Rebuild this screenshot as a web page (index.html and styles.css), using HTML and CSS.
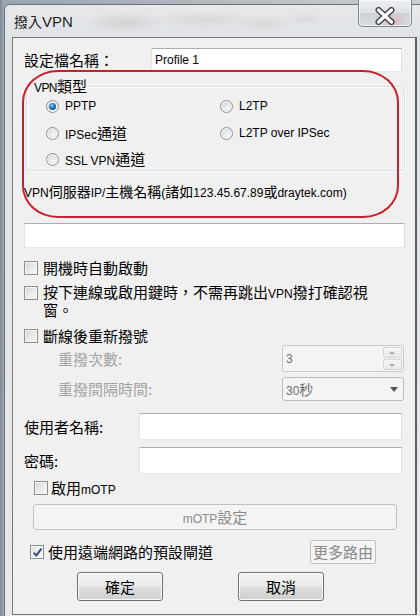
FILE: index.html
```html
<!DOCTYPE html>
<html lang="zh-Hant">
<head>
<meta charset="utf-8">
<title>撥入VPN</title>
<link rel="stylesheet" href="styles.css">
</head>
<body>
<div class="desk">
  <div class="window">
    <div class="titlebar">
      <span class="title"><span class="zh">撥入</span>VPN</span>
      <div class="close">
        <svg width="26" height="18" viewBox="0 0 26 18">
          <path d="M6.5 3 L19.5 15 M19.5 3 L6.5 15" stroke="#3c3c3c" stroke-width="6" stroke-linecap="round" fill="none"/>
          <path d="M6.5 3 L19.5 15 M19.5 3 L6.5 15" stroke="#ffffff" stroke-width="3.4" stroke-linecap="round" fill="none"/>
        </svg>
      </div>
    </div>
    <div class="client">
      <div class="row name-row">
        <span class="zh lbl-name">設定檔名稱：</span>
        <div class="input name-input">Profile 1</div>
      </div>

      <div class="group">
        <span class="legend">VPN<span class="zh">類型</span></span>
        <div class="radios">
          <div class="radio"><span class="rb on"></span><span class="rl">PPTP</span></div>
          <div class="radio"><span class="rb"></span><span class="rl">L2TP</span></div>
          <div class="radio"><span class="rb"></span><span class="rl">IPSec<span class="zh">通道</span></span></div>
          <div class="radio"><span class="rb"></span><span class="rl">L2TP over IPSec</span></div>
          <div class="radio"><span class="rb"></span><span class="rl">SSL VPN<span class="zh">通道</span></span></div>
        </div>
      </div>

      <div class="server-label"><span class="lat">VPN</span><span class="zh">伺服器</span>IP/<span class="zh">主機名稱</span>(<span class="zh">諸如</span>123.45.67.89<span class="zh">或</span>draytek.com)</div>
      <div class="input server-input"></div>

      <div class="check-row cr1"><span class="cb"></span><span class="zh">開機時自動啟動</span></div>
      <div class="check-row cr2"><span class="cb"></span><span class="zh wrap">按下連線或啟用鍵時，不需再跳出<span class="lat">VPN</span>撥打確認視<br>窗。</span></div>
      <div class="check-row cr3"><span class="cb"></span><span class="zh">斷線後重新撥號</span></div>

      <div class="sub-row sr1">
        <span class="zh sub-lbl">重撥次數:</span>
        <div class="spin">
          <span class="spin-val">3</span>
          <div class="spin-btns">
            <span class="sb up"></span>
            <span class="sb down"></span>
          </div>
        </div>
      </div>
      <div class="sub-row sr2">
        <span class="zh sub-lbl">重撥間隔時間:</span>
        <div class="combo">
          <span class="combo-val">30<span class="zh">秒</span></span>
          <span class="combo-arrow"></span>
        </div>
      </div>

      <div class="field-row fr1">
        <span class="zh field-lbl">使用者名稱:</span>
        <div class="input field-input"></div>
      </div>
      <div class="field-row fr2">
        <span class="zh field-lbl">密碼:</span>
        <div class="input field-input"></div>
      </div>

      <div class="check-row motp-row"><span class="cb"></span><span class="motp-lbl"><span class="zh">啟用</span>mOTP</span></div>
      <div class="btn disabled motp-btn"><span>mOTP<span class="zh">設定</span></span></div>

      <div class="gw-row">
        <span class="cb checked">
          <svg width="11" height="11" viewBox="0 0 11 11"><path d="M1.8 5.6 L4.3 8.6 L9.4 1.6" stroke="#354c86" stroke-width="2" fill="none" stroke-linejoin="round"/></svg>
        </span>
        <span class="zh gw-text">使用遠端網路的預設閘道</span>
        <div class="btn disabled more-btn"><span class="zh">更多路由</span></div>
      </div>

      <div class="btn-row">
        <div class="btn ok"><span class="zh">確定</span></div>
        <div class="btn cancel"><span class="zh">取消</span></div>
      </div>
    </div>
    <div class="annot"></div>
  </div>
</div>
</body>
</html>
```

FILE: styles.css
```css
* { box-sizing: border-box; }
html, body {
  margin: 0;
  padding: 0;
}
body {
  width: 420px;
  height: 616px;
  overflow: hidden;
  background: linear-gradient(90deg, #7d8894 0, #9aa4ae 3px, #c9d0d4 100%);
  font-family: "Liberation Sans", "Noto Sans CJK TC", sans-serif;
  font-size: 12px;
  color: #000;
}
.zh {
  font-family: "Noto Sans CJK TC", sans-serif;
  font-size: 15px;
}
.lat {
  font-family: "Liberation Sans", sans-serif;
  font-size: 12px;
}
.desk {
  padding: 4px 0 0 4px;
}
.window {
  position: relative;
  width: 430px;
  height: 640px;
  border: 1px solid #6e747a;
  border-radius: 6px 6px 0 0;
  background: linear-gradient(180deg, #e6e8ea 0, #dfe2e5 40px, #e8eaec 100%);
}
.titlebar {
  height: 32px;
  position: relative;
  background:
    radial-gradient(ellipse 40px 10px at 120px 17px, rgba(120,110,110,0.16), transparent),
    radial-gradient(ellipse 50px 9px at 200px 15px, rgba(140,120,120,0.13), transparent),
    radial-gradient(ellipse 30px 8px at 260px 18px, rgba(150,120,120,0.12), transparent),
    radial-gradient(ellipse 20px 6px at 300px 14px, rgba(120,120,140,0.10), transparent);
  border-radius: 6px 6px 0 0;
}
.title {
  position: absolute;
  left: 9px;
  top: 7px;
  height: 18px;
  font-size: 15px;
  line-height: 18px;
  color: #1e1e1e;
}
.title .zh { font-size: 14px; line-height: 18px; }
.close {
  position: absolute;
  left: 353px;
  top: -5px;
  width: 54px;
  height: 27px;
  border: 1px solid #80858a;
  border-top: none;
  border-radius: 0 0 5px 5px;
  background:
    radial-gradient(ellipse 14px 10px at 34px 22px, rgba(230,120,130,0.35), transparent),
    linear-gradient(180deg, #eceef0 0, #dfe2e5 50%, #cfd3d7 51%, #d8dbde 100%);
  box-shadow: inset 0 0 0 1px rgba(255,255,255,0.6);
  display: flex;
  align-items: center;
  justify-content: center;
  padding-top: 5px;
}
.client {
  margin-left: 7px;
  width: 405px;
  height: 578px;
  border: 1px solid #767a7e;
  border-right: 2px solid #5d6165;
  background: #f0f0f0;
  padding: 10px 10px 0 11px;
  display: flex;
  flex-direction: column;
}
.client .zh, .client .lat { line-height: 18px; }
.input {
  background: #fff;
  border: 1px solid;
  border-color: #abadb3 #dbdfe6 #e3e9ef #e2e3ea;
}
.name-row {
  display: flex;
  align-items: center;
  height: 24px;
  flex: none;
}
.lbl-name {
  width: 127px;
}
.name-input {
  width: 251px;
  height: 24px;
  padding: 4px 0 0 3px;
  line-height: 15px;
}
.group {
  position: relative;
  flex: none;
  margin: 14px 0 0 2px;
  width: 379px;
  height: 85px;
  border: 1px solid #d5dfe5;
  border-radius: 3px;
  box-shadow: inset 1px 1px 0 #fff, 1px 1px 0 #fff;
  padding: 6px 0 0 19px;
}
.legend {
  position: absolute;
  left: 6px;
  top: -10px;
  height: 18px;
  background: #f0f0f0;
  padding: 0 1px;
  line-height: 18px;
  letter-spacing: -0.6px;
}
.legend .zh { letter-spacing: 0; }
.radios {
  display: grid;
  grid-template-columns: 174px 180px;
  grid-template-rows: 27px 26px 26px;
}
.radio {
  display: flex;
  align-items: center;
  gap: 6px;
  height: 26px;
}
.rl {
  height: 18px;
  line-height: 18px;
  white-space: nowrap;
}
.rb {
  width: 13px;
  height: 13px;
  border-radius: 50%;
  border: 1px solid #8e8f8f;
  background: radial-gradient(circle at 60% 65%, #f6f6f6 0, #e4e4e4 45%, #c9c9c9 100%);
  box-shadow: inset 0 0 0 1px #fbfbfb;
  flex: none;
  position: relative;
}
.rb.on::after {
  content: "";
  position: absolute;
  left: 2px;
  top: 2px;
  width: 7px;
  height: 7px;
  border-radius: 50%;
  background: radial-gradient(circle at 40% 35%, #9bd4f6 0, #2f8bd0 35%, #0c4d92 80%, #0a3f78 100%);
}
.server-label {
  flex: none;
  margin-top: 11px;
  height: 18px;
  line-height: 18px;
  white-space: nowrap;
}
.server-label .zh { font-size: 14px; }
.server-input {
  flex: none;
  margin-top: 23px;
  width: 381px;
  height: 25px;
}
.check-row {
  flex: none;
  display: flex;
  align-items: center;
  gap: 5px;
  height: 18px;
}
.cb {
  width: 14px;
  height: 14px;
  flex: none;
  border: 1px solid #8e8f8f;
  background: linear-gradient(135deg, #d2d4d6 0, #e8e9ea 50%, #f8f8f8 100%);
  box-shadow: inset 0 0 0 1px #f4f4f4;
  display: flex;
  align-items: center;
  justify-content: center;
}
.cb.checked {
  background: linear-gradient(135deg, #dfe2e6 0, #f2f3f4 60%, #ffffff 100%);
}
.cr1 { margin-top: 11px; }
.cr2 {
  margin-top: 7px;
  height: 32px;
  align-items: flex-start;
}
.cr2 .cb { margin-top: 2px; }
.client .cr2 .wrap { line-height: 16px; }
.client .cr2 .wrap .lat { line-height: 16px; }
.cr3 { margin-top: 11px; }
.sub-row {
  flex: none;
  display: flex;
  align-items: center;
  padding-left: 34px;
}
.sub-lbl {
  width: 224px;
  color: #a3a3a3;
}
.sr1 { height: 27px; margin-top: 0; }
.sr2 { height: 24px; margin-top: 5px; }
.spin {
  width: 122px;
  height: 27px;
  border: 1px solid #c7c9cc;
  border-radius: 2px;
  background: #f4f4f4;
  display: flex;
  align-items: center;
  justify-content: space-between;
  padding: 1px 1px 1px 3px;
}
.spin-val { color: #6d6d6d; }
.spin-btns {
  width: 19px;
  height: 23px;
  display: flex;
  flex-direction: column;
  gap: 1px;
}
.sb {
  flex: 1;
  border: 1px solid #d4d6d8;
  border-radius: 2px;
  background: linear-gradient(#f6f6f6, #e8e8e8);
  position: relative;
}
.sb::after {
  content: "";
  position: absolute;
  left: 5px;
  width: 0;
  height: 0;
  border-left: 3.5px solid transparent;
  border-right: 3.5px solid transparent;
}
.sb.up::after { top: 3px; border-bottom: 3.5px solid #a8a8a8; }
.sb.down::after { top: 4px; border-top: 3.5px solid #a8a8a8; }
.combo {
  width: 122px;
  height: 24px;
  border: 1px solid #b9bcbf;
  border-radius: 3px;
  background: #f4f4f4;
  display: flex;
  align-items: center;
  justify-content: space-between;
  padding: 0 5px 0 3px;
}
.combo-val { color: #6d6d6d; height: 18px; line-height: 18px; }
.combo-val .zh { font-size: 14px; }
.combo-arrow {
  width: 0;
  height: 0;
  border-left: 4px solid transparent;
  border-right: 4px solid transparent;
  border-top: 5px solid #555;
}
.field-row {
  flex: none;
  display: flex;
  align-items: center;
  height: 27px;
}
.field-lbl { width: 115px; }
.field-input { width: 263px; height: 27px; }
.fr1 { margin-top: 12px; }
.fr2 { margin-top: 7px; }
.motp-row {
  margin-top: 5px;
  margin-left: 10px;
  gap: 3px;
}
.motp-lbl { height: 18px; line-height: 18px; white-space: nowrap; }
.btn {
  flex: none;
  border: 1px solid #707070;
  border-radius: 3px;
  background: linear-gradient(180deg, #f2f2f2 0, #ebebeb 48%, #dddddd 52%, #cfcfcf 100%);
  box-shadow: inset 0 0 0 1px #fbfbfb;
  display: flex;
  align-items: center;
  justify-content: center;
  line-height: 18px;
}
.btn > span { height: 18px; line-height: 18px; }
.btn.disabled {
  border-color: #bfc2c5;
  background: #f4f4f4;
  box-shadow: none;
  color: #8a8a8a;
}
.motp-btn {
  margin: 7px 0 0 9px;
  width: 364px;
  height: 26px;
}
.gw-row {
  flex: none;
  display: flex;
  align-items: center;
  height: 24px;
  margin-top: 10px;
  padding-left: 6px;
}
.gw-text { margin-left: 4px; }
.more-btn {
  margin-left: auto;
  margin-right: 29px;
  width: 66px;
  height: 24px;
  border-radius: 2px;
}
.btn-row {
  flex: none;
  display: flex;
  margin-top: 8px;
  padding-left: 53px;
  gap: 75px;
}
.ok { width: 86px; height: 29px; }
.cancel { width: 86px; height: 29px; }
.annot {
  position: absolute;
  left: 17px;
  top: 65px;
  width: 377px;
  height: 148px;
  border: 2px solid #c8202c;
  border-radius: 36px / 32px;
  pointer-events: none;
}
```
